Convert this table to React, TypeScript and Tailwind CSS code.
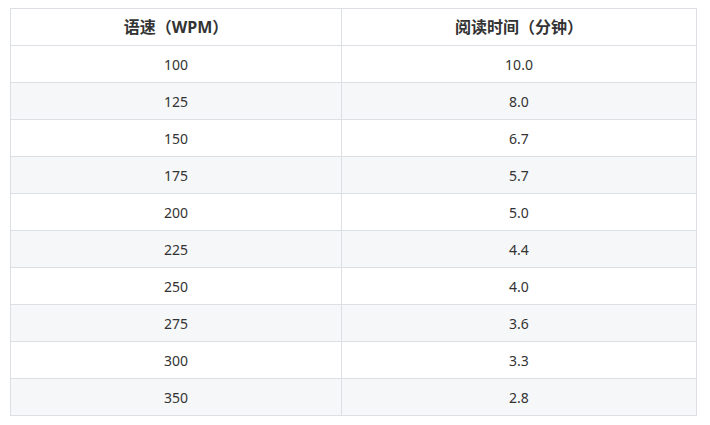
import React from "react";

const rows: [string, string][] = [
    ["100", "10.0"],
    ["125", "8.0"],
    ["150", "6.7"],
    ["175", "5.7"],
    ["200", "5.0"],
    ["225", "4.4"],
    ["250", "4.0"],
    ["275", "3.6"],
    ["300", "3.3"],
    ["350", "2.8"],
];

export default function App() {
    return (
        <div className="w-[710px] h-[425px] bg-white pt-2 pl-[10px] font-['Segoe_UI','Noto_Sans','Noto_Sans_CJK_SC',sans-serif] text-[14px] text-[#333]">
            <table className="border-collapse table-fixed w-[686px]">
                <colgroup>
                    <col className="w-[331px]" />
                    <col className="w-[355px]" />
                </colgroup>
                <thead>
                    <tr className="h-[37px] bg-white">
                        <th className="border border-[#dcdfe3] font-bold text-center text-[16px]">语速（WPM）</th>
                        <th className="border border-[#dcdfe3] font-bold text-center text-[16px]">阅读时间（分钟）</th>
                    </tr>
                </thead>
                <tbody>
                    {rows.map(([wpm, minutes], i) => (
                        <tr key={wpm} className={`h-[37px] ${i % 2 === 1 ? "bg-[#f6f7f9]" : "bg-white"}`}>
                            <td className="border border-[#dcdfe3] text-center">{wpm}</td>
                            <td className="border border-[#dcdfe3] text-center">{minutes}</td>
                        </tr>
                    ))}
                </tbody>
            </table>
        </div>
    );
}
